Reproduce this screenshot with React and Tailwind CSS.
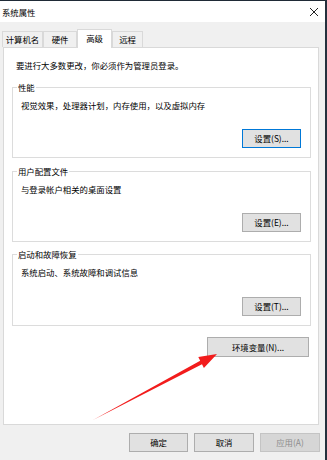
import React from "react";

function Btn({ children, className = "", focus, disabled }) {
  return (
    <div
      className={
        "flex items-center justify-center border " +
        (disabled
          ? "bg-[#d6d6d6] border-[#c4c4c4] text-[#8c8c8c] "
          : focus
          ? "bg-[#e1e1e1] border-[#0078d7] "
          : "bg-[#e1e1e1] border-[#adadad] ") +
        className
      }
    >
      {children}
    </div>
  );
}

function Group({ title, text, btn, h }) {
  return (
    <div className={"relative ml-[8px] w-[299px] border border-[#dcdcdc] flex flex-col " + h}>
      <span className="absolute left-[4px] top-[-7px] bg-white px-[1px] leading-[12px]">{title}</span>
      <div className="pl-[8px] pt-[11px] leading-[12px]">{text}</div>
      <div className="mt-auto mb-[9px] mr-[9px] self-end">{btn}</div>
    </div>
  );
}

const tabs = [
  { name: "计算机名", w: "w-[41px]" },
  { name: "硬件", w: "w-[34px]" },
  { name: "高级", w: "w-[35px]", active: true },
  { name: "远程", w: "w-[31px]" },
];

export default function App() {
  return (
    <div className="relative w-[327px] h-[460px] bg-[#f0f0f0] border-r-2 border-[#24303d] overflow-hidden font-['Noto_Sans_CJK_SC',sans-serif] text-[8.4px] text-black">
      <div className="h-[22px] bg-white border-t border-[#1f2a36] flex items-center justify-between pl-[2px] pr-[6px]">
        <span className="leading-[12px]">系统属性</span>
        <svg width="10" height="10" viewBox="0 0 10 10">
          <path d="M1 1 L9 9 M9 1 L1 9" stroke="#222" strokeWidth="1" fill="none" />
        </svg>
      </div>

      <div className="flex items-end pl-[2px] pt-[7px] h-[25px]">
        {tabs.map((t) =>
          t.active ? (
            <div
              key={t.name}
              className={"relative z-10 -mb-px h-[19px] bg-white border border-b-0 border-[#d9d9d9] flex items-center justify-center pb-[2px] " + t.w}
            >
              {t.name}
            </div>
          ) : (
            <div
              key={t.name}
              className={"h-[16px] bg-[#f0f0f0] border border-b-0 border-[#d9d9d9] flex items-center justify-center " + t.w}
            >
              {t.name}
            </div>
          )
        )}
      </div>

      <div className="ml-[3px] w-[316px] h-[378px] bg-white border border-[#d9d9d9] flex flex-col">
        <div className="pl-[12px] pt-[11px] leading-[12px]">要进行大多数更改，你必须作为管理员登录。</div>
        <div className="mt-[16px]">
          <Group
            h="h-[71px]"
            title="性能"
            text="视觉效果，处理器计划，内存使用，以及虚拟内存"
            btn={<Btn focus className="w-[59px] h-[19px]">设置(S)...</Btn>}
          />
        </div>
        <div className="mt-[13px]">
          <Group
            h="h-[71px]"
            title="用户配置文件"
            text="与登录帐户相关的桌面设置"
            btn={<Btn className="w-[59px] h-[19px]">设置(E)...</Btn>}
          />
        </div>
        <div className="mt-[12px]">
          <Group
            h="h-[72px]"
            title="启动和故障恢复"
            text="系统启动、系统故障和调试信息"
            btn={<Btn className="w-[59px] h-[19px]">设置(T)...</Btn>}
          />
        </div>
        <div className="mt-[11px] self-end mr-[9px]">
          <Btn className="w-[102px] h-[20px]">环境变量(N)...</Btn>
        </div>
      </div>

      <div className="flex justify-end gap-[6px] mt-[8px] pr-[5px]">
        <Btn className="w-[59px] h-[19px]">确定</Btn>
        <Btn className="w-[60px] h-[19px]">取消</Btn>
        <Btn disabled className="w-[60px] h-[19px]">应用(A)</Btn>
      </div>

      <svg className="absolute inset-0 pointer-events-none" width="327" height="460" viewBox="0 0 327 460">
        <polygon
          points="93,420 202,364.3 203.9,368 217,354 198.3,357 200.2,360.7"
          fill="#f21c1c"
        />
      </svg>
    </div>
  );
}
